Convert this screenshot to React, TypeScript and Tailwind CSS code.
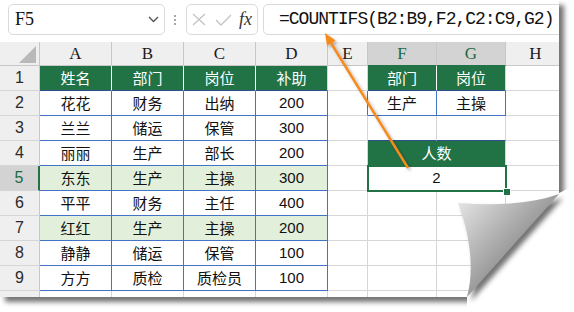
import React from "react";

function C({ c, children }: { c: string; children?: React.ReactNode }) {
  return (
    <div className={"flex items-center justify-center border-r border-b overflow-hidden " + c}>
      {children}
    </div>
  );
}

const data = [
  ["花花", "财务", "出纳", "200"],
  ["兰兰", "储运", "保管", "300"],
  ["丽丽", "生产", "部长", "200"],
  ["东东", "生产", "主操", "300"],
  ["平平", "财务", "主任", "400"],
  ["红红", "生产", "主操", "200"],
  ["静静", "储运", "保管", "100"],
  ["方方", "质检", "质检员", "100"],
];

const HDR = "bg-[#efefef] border-r-[#c8c8c8] border-b-[#c8c8c8] font-['Liberation_Serif',serif] text-[17px] text-[#1a1a1a]";
const HDR_SEL = "bg-[#d3d3d3] border-r-[#c8c8c8] border-b-[#217346] font-['Liberation_Serif',serif] text-[17px] text-[#1d6a40]";
const ROWH = "bg-[#efefef] border-r-[#c8c8c8] border-b-[#d6d6d6] font-['Liberation_Sans',sans-serif] text-[16px] text-[#2a2a2a]";
const ROWH_SEL = "bg-[#d3d3d3] border-r-2 border-r-[#217346] border-b-[#d6d6d6] font-['Liberation_Sans',sans-serif] text-[16px] text-[#1d6a40]";
const GRID = "border-r-[#d6d6d6] border-b-[#d6d6d6]";
const CJK = "font-['Noto_Sans_CJK_SC',sans-serif] text-[15px] text-[#111]";
const NUM = "font-['Liberation_Sans',sans-serif] text-[15px] text-[#111]";
const GREEN_CELL = "bg-[#217346] font-['Noto_Sans_CJK_SC',sans-serif] text-[15px] text-white";

export default function App() {
  const cells: React.ReactNode[] = [];
  cells.push(
    <div key="corner" className="relative border-r border-b bg-[#efefef] border-r-[#c8c8c8] border-b-[#c8c8c8]">
      <svg className="absolute right-[3px] bottom-[2px]" width="17" height="17" viewBox="0 0 17 17">
        <polygon points="17,0 17,17 0,17" fill="#b9b9b9" />
      </svg>
    </div>
  );
  ["A", "B", "C", "D", "E"].forEach((l) => cells.push(<C key={"h" + l} c={HDR}>{l}</C>));
  cells.push(<C key="hF" c={HDR_SEL}>F</C>);
  cells.push(<C key="hG" c={HDR_SEL}>G</C>);
  cells.push(<C key="hH" c={HDR}>H</C>);

  cells.push(<C key="r1" c={ROWH}>1</C>);
  ["姓名", "部门", "岗位"].forEach((t) =>
    cells.push(<C key={"1" + t} c={GREEN_CELL + " border-r-white border-b-[#2d4f8e]"}>{t}</C>)
  );
  cells.push(<C key="1补助" c={GREEN_CELL + " border-r-[#d6d6d6] border-b-[#2d4f8e]"}>补助</C>);
  cells.push(<C key="1E" c={GRID} />);
  cells.push(<C key="1F" c={GREEN_CELL + " border-r-white border-b-[#2d4f8e]"}>部门</C>);
  cells.push(<C key="1G" c={GREEN_CELL + " border-r-[#d6d6d6] border-b-[#2d4f8e]"}>岗位</C>);
  cells.push(<C key="1H" c={GRID} />);

  data.forEach((row, i) => {
    const r = i + 2;
    const hl = r === 5 || r === 7 ? " bg-[#e2efda]" : "";
    cells.push(<C key={"rh" + r} c={r === 5 ? ROWH_SEL : ROWH}>{r}</C>);
    cells.push(<C key={r + "A"} c={CJK + hl + " border-r-[#4472c4] border-b-[#4472c4]"}>{row[0]}</C>);
    cells.push(<C key={r + "B"} c={CJK + hl + " border-r-[#4472c4] border-b-[#4472c4]"}>{row[1]}</C>);
    cells.push(<C key={r + "C"} c={CJK + hl + " border-r-[#4472c4] border-b-[#4472c4]"}>{row[2]}</C>);
    cells.push(<C key={r + "D"} c={NUM + hl + " border-r-[#4472c4] border-b-[#4472c4]"}>{row[3]}</C>);
    if (r === 2) {
      cells.push(<C key="2E" c="border-r-[#4472c4] border-b-[#d6d6d6]" />);
      cells.push(<C key="2F" c={CJK + " border-r-[#4472c4] border-b-[#4472c4]"}>生产</C>);
      cells.push(<C key="2G" c={CJK + " border-r-[#4472c4] border-b-[#4472c4]"}>主操</C>);
    } else if (r === 3) {
      cells.push(<C key="3E" c={GRID} />);
      cells.push(<C key="3F" c="border-r-[#d6d6d6] border-b-[#2d4f8e]" />);
      cells.push(<C key="3G" c="border-r-[#d6d6d6] border-b-[#2d4f8e]" />);
    } else if (r === 4) {
      cells.push(<C key="4E" c={GRID} />);
      cells.push(
        <div key="4FG" className={"col-span-2 flex items-center justify-center border-r border-b border-r-[#d6d6d6] border-b-[#217346] " + GREEN_CELL}>
          人数
        </div>
      );
    } else if (r === 5) {
      cells.push(<C key="5E" c={GRID} />);
      cells.push(
        <div key="5FG" className={"relative col-span-2 flex items-center justify-center border-r border-b border-r-[#d6d6d6] border-b-[#d6d6d6] " + NUM}>
          2
          <div className="absolute -left-[1px] -top-[1px] h-[27px] w-[140px] border-2 border-[#217346]" />
          <div className="absolute left-[135px] top-[22px] h-[8px] w-[8px] border border-white bg-[#217346]" />
        </div>
      );
    } else {
      cells.push(<C key={r + "E"} c={GRID} />);
      cells.push(<C key={r + "F"} c={GRID} />);
      cells.push(<C key={r + "G"} c={GRID} />);
    }
    cells.push(<C key={r + "H"} c={GRID} />);
  });
  cells.push(<C key="rh10" c={ROWH} />);
  ["A", "B", "C", "D", "E", "F", "G", "H"].forEach((l) => cells.push(<C key={"10" + l} c={GRID} />));

  return (
    <div className="relative h-[312px] w-[574px] overflow-hidden bg-white">
      <div className="relative h-[297px] w-[559px] overflow-hidden bg-white shadow-[5px_5px_5px_rgba(0,0,0,0.55)]">
        <div className="flex h-[42px] items-start pt-[4px]">
          <div className="ml-[8px] flex h-[31px] w-[157px] shrink-0 items-center justify-between rounded-[5px] border border-[#dadada] pl-[6px] pr-[5px]">
            <span className="font-['Liberation_Serif',serif] text-[18px] text-[#111]">F5</span>
            <svg width="11" height="7" viewBox="0 0 11 7">
              <polyline points="1,1 5.5,5.5 10,1" fill="none" stroke="#555" strokeWidth="1.4" />
            </svg>
          </div>
          <div className="ml-[5px] flex h-[31px] w-[10px] shrink-0 flex-col items-center justify-center gap-[2px]">
            <div className="h-[2px] w-[2px] bg-[#a8a8a8]" />
            <div className="h-[2px] w-[2px] bg-[#a8a8a8]" />
            <div className="h-[2px] w-[2px] bg-[#a8a8a8]" />
          </div>
          <div className="ml-[6px] flex h-[31px] w-[72px] shrink-0 items-center rounded-[5px] border border-[#dadada] pl-[5px]">
            <svg width="14" height="13" viewBox="0 0 14 13">
              <path d="M1,1 L13,12 M13,1 L1,12" stroke="#c4c4c4" strokeWidth="1.3" fill="none" />
            </svg>
            <svg className="ml-[9px]" width="17" height="12" viewBox="0 0 17 12">
              <polyline points="1,6 6,11 16,1" stroke="#c4c4c4" strokeWidth="1.3" fill="none" />
            </svg>
            <span className="ml-[7px] font-['Liberation_Serif',serif] text-[18px] italic text-[#333]">fx</span>
          </div>
          <div className="ml-[5px] flex h-[31px] w-[310px] shrink-0 items-center rounded-[5px] border border-[#dadada] pl-[15px]">
            <span className="whitespace-pre font-['Liberation_Mono',monospace] text-[18px] tracking-[-1px] text-[#111]">
              =COUNTIFS(B2:B9,F2,C2:C9,G2)
            </span>
          </div>
        </div>
        <div className="grid grid-cols-[40px_72px_72px_72px_72px_40px_69px_69px_60px] grid-rows-[24px_repeat(10,25px)]">
          {cells}
        </div>
      </div>

      <svg className="pointer-events-none absolute left-0 top-0" width="574" height="312" viewBox="0 0 574 312">
        <defs>
          <linearGradient id="curl" x1="458" y1="203" x2="525" y2="265" gradientUnits="userSpaceOnUse">
            <stop offset="0" stopColor="#e4e4e4" />
            <stop offset="1" stopColor="#858585" />
          </linearGradient>
          <filter id="blur" x="-20%" y="-20%" width="140%" height="140%">
            <feGaussianBlur stdDeviation="2.5" />
          </filter>
          <filter id="ash" x="-20%" y="-20%" width="140%" height="140%">
            <feDropShadow dx="2" dy="2" stdDeviation="1.5" floodColor="#000" floodOpacity="0.3" />
          </filter>
        </defs>
        <polygon points="467,297 559,193 574,186 574,312 467,312" fill="#ffffff" />
        <path d="M458,203 Q520,208 559,194 L467,297 C476,265 467,225 458,203 Z" fill="#444" opacity="0.75" filter="url(#blur)" transform="translate(4,4)" />
        <path d="M458,203 Q520,208 559,194 L467,297 C476,265 467,225 458,203 Z" fill="url(#curl)" />
        <g filter="url(#ash)">
          <line x1="408" y1="168" x2="331" y2="43" stroke="#f68b1f" strokeWidth="2.4" />
          <polygon points="325,33 335.6,40.6 327,45.8" fill="#f68b1f" />
        </g>
      </svg>
    </div>
  );
}
